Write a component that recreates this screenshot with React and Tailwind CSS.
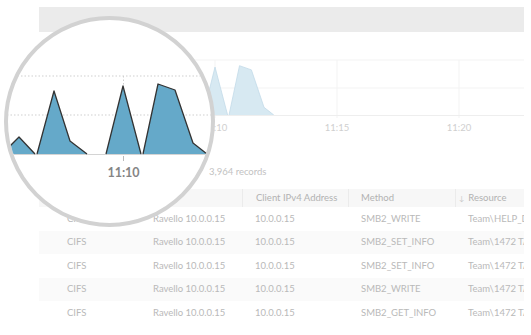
import React from 'react';

// peaks in the lens coordinate space (page px, baseline at y=154)
const peaks = [
  [[2, 154], [19, 137], [35, 154]],
  [[37, 154], [54, 91], [70, 141], [87, 154]],
  [[106, 154], [123, 86], [141, 154]],
  [[143, 154], [158, 84], [175, 90], [193, 143], [207, 154]],
];

// lens -> background chart (baseline y=115, 11:10 tick at x=215)
const shrink = ([x, y]) => [215 + (x - 123) * 0.7, 115 - (154 - y) * 0.704];

const pts = (arr) => arr.map(([x, y]) => `${x.toFixed(1)},${y.toFixed(1)}`).join(' ');

const rows = [
  ['CIFS', 'Ravello 10.0.0.15', '10.0.0.15', 'SMB2_WRITE', 'Team\\HELP_DESK'],
  ['CIFS', 'Ravello 10.0.0.15', '10.0.0.15', 'SMB2_SET_INFO', 'Team\\1472 TAXES'],
  ['CIFS', 'Ravello 10.0.0.15', '10.0.0.15', 'SMB2_SET_INFO', 'Team\\1472 TAXES'],
  ['CIFS', 'Ravello 10.0.0.15', '10.0.0.15', 'SMB2_WRITE', 'Team\\1472 TAXES'],
  ['CIFS', 'Ravello 10.0.0.15', '10.0.0.15', 'SMB2_GET_INFO', 'Team\\1472 TAXES'],
];

const cols = 'grid grid-cols-[101px_102px_106px_107px_1fr]';

function BackgroundChart() {
  return (
    <svg className="block w-[485px] h-[106px]" viewBox="39 32 485 106">
      <line x1="39" x2="524" y1="60" y2="60" stroke="#f3f3f3" />
      <line x1="39" x2="524" y1="88" y2="88" stroke="#f3f3f3" />
      {[93, 215, 337, 459].map((x) => (
        <line key={x} x1={x} x2={x} y1="60" y2="118" stroke="#f3f3f3" />
      ))}
      {peaks.map((p, i) => {
        const s = p.map(shrink);
        return (
          <g key={i}>
            <polygon points={pts(s)} fill="#d7e9f2" />
            <polyline points={pts(s)} fill="none" stroke="#c3dbe8" strokeWidth="0.8" />
          </g>
        );
      })}
      <line x1="39" x2="524" y1="115.5" y2="115.5" stroke="#eeeeee" />
      {[['11:05', 93], ['11:10', 215], ['11:15', 337], ['11:20', 459]].map(([t, x]) => (
        <text key={t} x={x} y="131" textAnchor="middle" fontSize="9.5" fill="#cfcfcf" fontFamily="Lato, sans-serif">
          {t}
        </text>
      ))}
    </svg>
  );
}

function Lens() {
  return (
    <div className="absolute left-[4px] top-[16px] w-[211px] h-[211px] rounded-full border-4 border-[#d2d2d2] bg-white overflow-hidden">
      <svg className="absolute inset-0 w-full h-full" viewBox="8 20 203 203">
        <line x1="0" x2="220" y1="76" y2="76" stroke="#cfcfcf" strokeDasharray="1.5 2" />
        <line x1="0" x2="220" y1="115" y2="115" stroke="#cfcfcf" strokeDasharray="1.5 2" />
        <line x1="123.5" x2="123.5" y1="76" y2="154" stroke="#d0d0d0" strokeDasharray="1.5 2" />
        {peaks.map((p, i) => (
          <polygon key={i} points={pts(p)} fill="#65a9c9" />
        ))}
        <line x1="0" x2="220" y1="154.5" y2="154.5" stroke="#d4d4d4" />
        {peaks.map((p, i) => (
          <polyline key={i} points={pts(p)} fill="none" stroke="#333333" strokeWidth="1.3" strokeLinejoin="round" />
        ))}
        <line x1="123.5" x2="123.5" y1="156" y2="161" stroke="#bbbbbb" />
        <text x="123.5" y="176.5" textAnchor="middle" fontSize="12.5" fontWeight="700" fill="#858585" fontFamily="Lato, sans-serif">
          11:10
        </text>
      </svg>
    </div>
  );
}

export default function App() {
  return (
    <div className="relative w-[531px] h-[335px] overflow-hidden bg-white font-['Lato',sans-serif]">
      <div className="ml-[39px] w-[485px] pt-[7px] overflow-hidden">
        <div className="h-[25px] bg-[#ebebeb]" />
        <BackgroundChart />
        <div className="h-[51px] pt-[26px] pl-[170px] text-[9.5px] leading-[16px] text-[#c2c2c2]">
          3,964 records
        </div>
        <div className={`${cols} h-[18px] bg-[#f7f7f7] text-[9.5px] text-[#b2b2b2] items-center`}>
          <div className="pl-[28px]">Protocol</div>
          <div className="pl-[13px]">Client</div>
          <div className="pl-[13px] h-full flex items-center border-l border-[#ebebeb]">Client IPv4 Address</div>
          <div className="pl-[12px] h-full flex items-center border-l border-[#ebebeb]">Method</div>
          <div className="pl-[3px] h-full flex items-center border-l border-[#ebebeb] whitespace-nowrap">
            <span className="text-[7px] mr-[4px] text-[#c8c8c8]">↓</span>Resource
          </div>
        </div>
        {rows.map((r, i) => (
          <div
            key={i}
            className={`${cols} h-[23.5px] items-center text-[9.5px] text-[#b9b9b9] whitespace-nowrap ${i % 2 === 1 ? 'bg-[#fafafa]' : 'bg-white'}`}
          >
            <div className="pl-[28px]">{r[0]}</div>
            <div className="pl-[13px]">{r[1]}</div>
            <div className="pl-[13px]">{r[2]}</div>
            <div className="pl-[13px]">{r[3]}</div>
            <div className="pl-[13px] overflow-hidden">{r[4]}</div>
          </div>
        ))}
      </div>
      <Lens />
    </div>
  );
}
